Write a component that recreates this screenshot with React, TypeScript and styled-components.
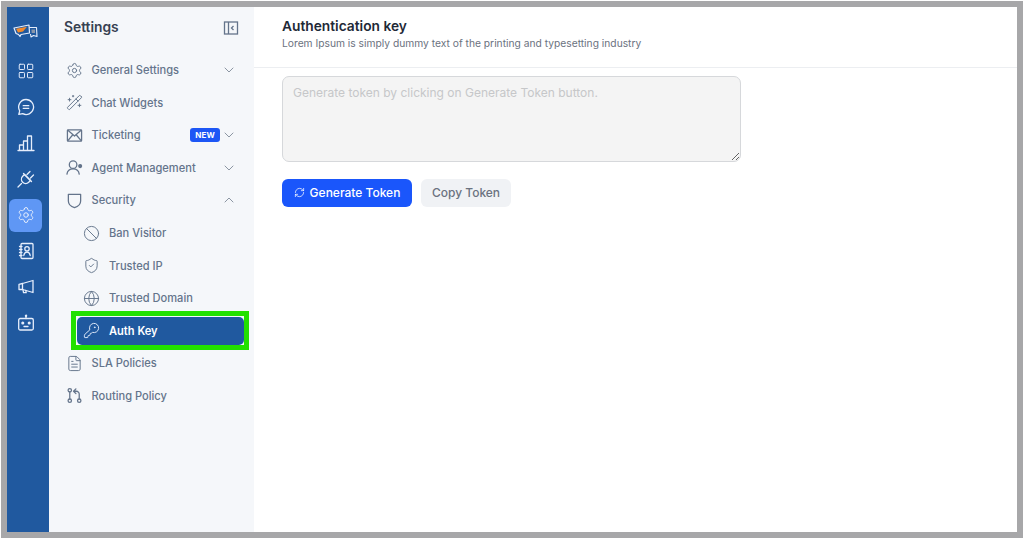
import React from "react";
import styled, { createGlobalStyle } from "styled-components";
import {
  LayoutGrid, Settings, ChevronDown, ChevronUp, WandSparkles, Ban, ShieldCheck,
  Globe, KeyRound, FileText, RefreshCw,
} from "lucide-react";

const Global = createGlobalStyle`
  html, body { margin: 0; padding: 0; background: #fff; }
  body { font-family: Inter, "Liberation Sans", sans-serif; overflow: hidden; }
`;

const Frame = styled.div`
  box-sizing: border-box;
  margin: 1px 0 0 1px;
  width: 1022px;
  height: 537px;
  border: 6px solid #a7a7a9;
  display: flex;
  background: #fff;
`;

const Rail = styled.nav`
  width: 42px;
  flex: none;
  background: #20599f;
  display: flex;
  flex-direction: column;
  align-items: center;
  padding: 17px 5px 0 0;
  box-sizing: border-box;
`;

const LogoSlot = styled.div`
  height: 14px;
  margin-bottom: 16.5px;
  display: flex;
  align-items: center;
`;

const RailItem = styled.div<{ $active?: boolean }>`
  width: 33px;
  height: 33px;
  margin-bottom: 3px;
  border-radius: 6px;
  display: flex;
  align-items: center;
  justify-content: center;
  color: #e6eefc;
  background: ${(p) => (p.$active ? "#5f97f5" : "transparent")};
`;

const Sidebar = styled.aside`
  width: 205px;
  flex: none;
  background: #f5f7fa;
  box-sizing: border-box;
`;

const SideHead = styled.div`
  height: 42px;
  padding: 0 15px;
  display: flex;
  align-items: center;
  justify-content: space-between;
  margin-bottom: 5px;
  box-sizing: border-box;
`;

const SideTitle = styled.h2`
  margin: 0 0 3px;
  font-size: 13.8px;
  font-weight: 600;
  color: #374151;
`;

const CollapseIcon = styled.span`
  display: flex;
  color: #64748b;
`;

const Menu = styled.ul`
  list-style: none;
  margin: 0.5px 0 0;
  padding: 0;
`;

const Row = styled.li<{ $sub?: boolean }>`
  height: 32.55px;
  display: flex;
  align-items: center;
  padding-left: ${(p) => (p.$sub ? "34px" : "16.5px")};
  padding-right: 17px;
  color: #64748b;
  font-size: 11.1px;
  font-weight: 500;
  box-sizing: border-box;
`;

const RowIcon = styled.span`
  width: 17px;
  display: flex;
  justify-content: center;
  margin-right: 9px;
  flex: none;
  color: #64748b;
`;

const RowLabel = styled.span`
  flex: 1;
  white-space: nowrap;
`;

const Badge = styled.span`
  background: #1d56f5;
  color: #fff;
  font-size: 8px;
  font-weight: 700;
  border-radius: 3px;
  padding: 2px 5px;
  line-height: 10px;
  letter-spacing: 0.2px;
  margin-right: 1px;
`;

const Chevron = styled.span`
  display: flex;
  color: #7b8794;
`;

const ActiveWrap = styled.li`
  height: 32.55px;
  display: flex;
  align-items: center;
  margin-left: 22px;
  width: 178px;
  position: relative;
`;

const Highlight = styled.div`
  position: absolute;
  left: 0;
  top: -3.500px;
  box-sizing: border-box;
  width: 178px;
  height: 39px;
  border: 5px solid #22e000;
`;

const ActiveRow = styled.div`
  position: relative;
  z-index: 1;
  margin-left: 6px;
  width: 167px;
  height: 28px;
  box-sizing: border-box;
  border-radius: 5px;
  background: #20599f;
  color: #fff;
  display: flex;
  align-items: center;
  padding-left: 6px;
  font-size: 11.1px;
  font-weight: 600;
`;

const ActiveIcon = styled.span`
  width: 17px;
  display: flex;
  justify-content: center;
  margin-right: 9px;
  color: #e6eefc;
`;

const Main = styled.main`
  flex: 1;
  min-width: 0;
`;

const Header = styled.header`
  height: 61px;
  border-bottom: 1px solid #eceef1;
  padding: 11px 0 0 28px;
  box-sizing: border-box;
`;

const Title = styled.h1`
  margin: 0;
  font-size: 13.75px;
  line-height: 17px;
  font-weight: 600;
  color: #1f2937;
`;

const Subtitle = styled.p`
  margin: 1px 0 0;
  font-size: 10.25px;
  line-height: 15px;
  color: #6b7280;
`;

const Body = styled.div`
  padding: 8px 0 0 28px;
`;

const TokenArea = styled.textarea`
  display: block;
  box-sizing: border-box;
  width: 459px;
  height: 86px;
  padding: 7px 10px;
  border: 1px solid #d6d8db;
  border-radius: 7px;
  background: #f4f4f4;
  font-family: inherit;
  font-size: 12px;
  line-height: 17px;
  &::placeholder { color: #c6c7c9; opacity: 1; }
`;

const Actions = styled.div`
  display: flex;
  gap: 9px;
  margin-top: 17px;
`;

const Button = styled.button<{ $primary?: boolean }>`
  height: 28px;
  border: 0;
  border-radius: 6px;
  padding: 0 0 1px;
  display: flex;
  align-items: center;
  justify-content: center;
  gap: 5px;
  font-family: inherit;
  font-size: 12px;
  font-weight: 500;
  width: ${(p) => (p.$primary ? "130px" : "90px")};
  background: ${(p) => (p.$primary ? "#1a56fb" : "#f0f2f5")};
  color: ${(p) => (p.$primary ? "#fff" : "#6b7280")};
`;

type IconProps = { size?: number; strokeWidth?: number };

const Svg = ({ size = 18, strokeWidth = 1.3, children }: IconProps & { children: React.ReactNode }) => (
  <svg width={size} height={size} viewBox="0 0 18 18" fill="none" stroke="currentColor" strokeWidth={strokeWidth} strokeLinecap="round" strokeLinejoin="round">
    {children}
  </svg>
);

const Logo = () => (
  <svg width="25" height="14" viewBox="0 0 25 14" fill="none">
    <path d="M1 4 L16 1 L16.500 9 L8 10.500 L7 12.500 L5.500 10.500 L3 9.500 Z" stroke="#e6eefc" strokeWidth="1.2" strokeLinejoin="round" />
    <path d="M3 4.800 L14 2.700 L10 7.500 L5 8.500 Z" fill="#f28a2c" />
    <path d="M16.200 3.500 L23.500 3.500 L24 12.500 L20.500 11.500 L18 13 L17.500 10" stroke="#e6eefc" strokeWidth="1.1" strokeLinejoin="round" />
    <path d="M18.500 5.500 L22 5.500 L22 9 L18.700 9 Z" fill="#8a97aa" />
  </svg>
);

const ChatIcon = (p: IconProps) => (
  <Svg {...p}>
    <path d="M9 1.500a7.500 7.500 0 1 1-3.300 14.200L1.800 16.400l.9-3.600A7.500 7.500 0 0 1 9 1.500Z" />
    <path d="M6.200 7.700h5.600M6.200 10.300h5.600" />
  </Svg>
);

const BarsIcon = (p: IconProps) => (
  <Svg {...p}>
    <path d="M1 16.500h16M2.500 16.500v-5.500h4v5.500M6.500 16.500V7h4v9.500M10.500 16.500V2h4v14.500" />
  </Svg>
);

const PlugIcon = (p: IconProps) => (
  <Svg {...p}>
    <path d="M1 17l3.500-3.500" />
    <path d="M7.500 4.500l6 6-1.800 1.800a4.200 4.200 0 0 1-6-6Z" />
    <path d="M10 4.500L13 1.500M13.500 8L16.500 5M6.500 3.500l8 8" />
  </Svg>
);

const BookIcon = (p: IconProps) => (
  <Svg {...p}>
    <rect x="4" y="1.500" width="12" height="15" rx="1" />
    <circle cx="10" cy="6.800" r="2.200" />
    <path d="M6.800 13.500c.3-2.300 1.500-3.300 3.200-3.300s2.900 1 3.200 3.300" />
    <path d="M2.500 4.500H5M2.500 7.500H5M2.500 10.500H5M2.500 13.500H5" />
  </Svg>
);

const HornIcon = (p: IconProps) => (
  <Svg {...p}>
    <path d="M16 2.500V14.500L5.500 11.500H2V6.300L5.500 5.500Z" />
    <path d="M5.500 5.500V11.500M6 11.700l.5 3h2.700l-.4-2.300" />
  </Svg>
);

const BotIcon = (p: IconProps) => (
  <Svg {...p}>
    <rect x="1.700" y="4.500" width="14.600" height="11.500" rx="1.500" />
    <path d="M9 4.500V2.500" />
    <circle cx="9" cy="1.800" r="0.6" fill="currentColor" />
    <circle cx="5.800" cy="9" r="0.9" fill="currentColor" />
    <circle cx="12.200" cy="9" r="0.9" fill="currentColor" />
    <path d="M7 12.500h4" />
  </Svg>
);

const EnvelopeIcon = (p: IconProps) => (
  <Svg {...p}>
    <rect x="1.500" y="3" width="15" height="12" rx="0.800" />
    <path d="M2 3.500 9 9.500 16 3.500M2 14.500 7 8.500M16 14.500 11 8.500" />
  </Svg>
);

const AgentIcon = (p: IconProps) => (
  <Svg {...p}>
    <circle cx="7.500" cy="6" r="4" />
    <path d="M1 16c.5-3.500 3-5.500 6.500-5.500S13.500 12.500 14 16" />
    <circle cx="15" cy="7.500" r="1.500" fill="currentColor" />
  </Svg>
);

const ShieldIcon = (p: IconProps) => (
  <Svg {...p}>
    <path d="M2.500 2.500H15.500V9.500C15.500 13 12.500 15.500 9 16.500 5.500 15.500 2.500 13 2.500 9.500Z" />
  </Svg>
);

const RoutingIcon = (p: IconProps) => (
  <Svg {...p}>
    <circle cx="4" cy="3.500" r="1.800" />
    <circle cx="4" cy="14.500" r="1.800" />
    <circle cx="14" cy="14.500" r="1.800" />
    <path d="M4 5.300v7.400" />
    <path d="M14 12.700V7.500a3 3 0 0 0-3-3H8.500M10.500 2 8 4.500 10.500 7" />
  </Svg>
);

const PanelIcon = () => (
  <svg width="16" height="16" viewBox="0 0 16 16" fill="none" stroke="currentColor" strokeWidth="1.3">
    <rect x="1.500" y="2" width="13" height="12" />
    <path d="M5.500 2v12M10.500 6 8.500 8l2 2" />
  </svg>
);

const I = { size: 17, strokeWidth: 1.35 };
const R = { size: 18, strokeWidth: 1.3 };
const C = { size: 16, strokeWidth: 1.3 };

const rail = [LayoutGrid, ChatIcon, BarsIcon, PlugIcon, Settings, BookIcon, HornIcon, BotIcon];

export default function App() {
  return (
    <>
      <Global />
      <Frame>
        <Rail>
          <LogoSlot><Logo /></LogoSlot>
          {rail.map((Icon, i) => (
            <RailItem key={i} $active={i === 4}>
              <Icon {...R} />
            </RailItem>
          ))}
        </Rail>
        <Sidebar>
          <SideHead>
            <SideTitle>Settings</SideTitle>
            <CollapseIcon><PanelIcon /></CollapseIcon>
          </SideHead>
          <Menu>
            <Row><RowIcon><Settings {...I} /></RowIcon><RowLabel>General Settings</RowLabel><Chevron><ChevronDown {...C} /></Chevron></Row>
            <Row><RowIcon><WandSparkles {...I} /></RowIcon><RowLabel>Chat Widgets</RowLabel></Row>
            <Row><RowIcon><EnvelopeIcon {...I} /></RowIcon><RowLabel>Ticketing</RowLabel><Badge>NEW</Badge><Chevron><ChevronDown {...C} /></Chevron></Row>
            <Row><RowIcon><AgentIcon {...I} /></RowIcon><RowLabel>Agent Management</RowLabel><Chevron><ChevronDown {...C} /></Chevron></Row>
            <Row><RowIcon><ShieldIcon {...I} /></RowIcon><RowLabel>Security</RowLabel><Chevron><ChevronUp {...C} /></Chevron></Row>
            <Row $sub><RowIcon><Ban {...I} /></RowIcon><RowLabel>Ban Visitor</RowLabel></Row>
            <Row $sub><RowIcon><ShieldCheck {...I} /></RowIcon><RowLabel>Trusted IP</RowLabel></Row>
            <Row $sub><RowIcon><Globe {...I} /></RowIcon><RowLabel>Trusted Domain</RowLabel></Row>
            <ActiveWrap>
              <Highlight />
              <ActiveRow><ActiveIcon><KeyRound {...I} /></ActiveIcon>Auth Key</ActiveRow>
            </ActiveWrap>
            <Row><RowIcon><FileText {...I} /></RowIcon><RowLabel>SLA Policies</RowLabel></Row>
            <Row><RowIcon><RoutingIcon {...I} /></RowIcon><RowLabel>Routing Policy</RowLabel></Row>
          </Menu>
        </Sidebar>
        <Main>
          <Header>
            <Title>Authentication key</Title>
            <Subtitle>Lorem Ipsum is simply dummy text of the printing and typesetting industry</Subtitle>
          </Header>
          <Body>
            <TokenArea disabled placeholder="Generate token by clicking on Generate Token button." />
            <Actions>
              <Button $primary><RefreshCw size={11} strokeWidth={1.6} />Generate Token</Button>
              <Button>Copy Token</Button>
            </Actions>
          </Body>
        </Main>
      </Frame>
    </>
  );
}
